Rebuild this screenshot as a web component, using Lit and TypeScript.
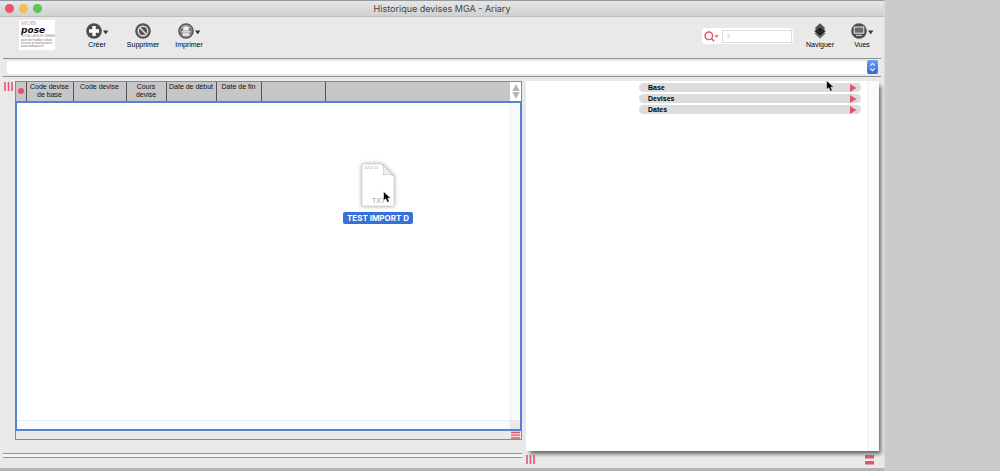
import { LitElement, html, css, svg } from "lit";
import { customElement } from "lit/decorators.js";

const COLUMNS = [
  { label: "Code devise de base", width: 47 },
  { label: "Code devise", width: 53 },
  { label: "Cours devise", width: 40 },
  { label: "Date de début", width: 50 },
  { label: "Date de fin", width: 45 },
  { label: "", width: 64 },
];

const SECTIONS = ["Base", "Devises", "Dates"];

const caret = svg`<path d="M17 7.6h5.4l-2.7 3.6z" fill="#333"/>`;

const icons = {
  add: { width: 22, art: svg`<circle cx="8" cy="8" r="7.8" fill="#4d4d4d"/><path d="M8 3v10M3 8h10" stroke="#fff" stroke-width="3.4"/>${caret}` },
  remove: { width: 16, art: svg`<circle cx="8" cy="8" r="7.8" fill="#555"/><circle cx="8" cy="8" r="4.8" fill="none" stroke="#ddd" stroke-width="1.4"/><path d="M4.8 4.8l6.4 6.4" stroke="#ddd" stroke-width="1.5"/>` },
  print: { width: 22, art: svg`<circle cx="8" cy="8" r="7" fill="#c4c4c4" stroke="#555" stroke-width="1.6"/><path d="M2.4 5h2v6h-2zM11.6 5h2v6h-2z" fill="#666"/><path d="M4.8 3h6.4v5H4.8zM4.2 9.8h7.6v3.4H4.2z" fill="#f0f0f0" stroke="#666" stroke-width=".7"/><path d="M3.4 8h9.2v1.6H3.4z" fill="#d4d4d4"/>${caret}` },
  layers: { width: 16, art: svg`<path d="M8 5.5l5.6 5L8 15.8l-5.6-5.3z" fill="#777"/><path d="M8 3l5.6 5L8 13.4 2.4 8z" fill="#222" stroke="#888" stroke-width=".4"/><path d="M8 .2l5.2 4.9L8 10.2 2.8 5.1z" fill="#555"/><path d="M5 6.5l3-2 3 2-3 3.2z" fill="#1c1c1c"/>` },
  views: { width: 22, art: svg`<circle cx="8" cy="8" r="7.8" fill="#4d4d4d"/><rect x="3.2" y="4" width="9.6" height="6.2" fill="#6a6a6a" stroke="#e8e8e8" stroke-width="1"/><path d="M5 12.4h6" stroke="#ccc" stroke-width="1.1"/>${caret}` },
};

const pointer = html`<svg width="8" height="12" viewBox="0 0 7 12" preserveAspectRatio="none" aria-hidden="true">
  <path d="M.5.6v8.9l1.9-1.8 1.4 3.5 1.7-.8L4.2 7.2h2.6z" fill="#000" stroke="#fff" stroke-width=".5"/>
</svg>`;

@customElement("tool-button")
class ToolButton extends LitElement {
  static properties = { icon: {}, label: {} };
  declare icon: keyof typeof icons;
  declare label: string;

  static styles = css`
    :host { display: block; }
    .tool {
      display: flex; flex-direction: column; align-items: center; gap: 1px;
      width: 100%; padding: 0; border: 0; background: none; color: #000;
      font: 7px/9px "Liberation Sans", Arial, sans-serif;
    }
    .glyph { display: block; overflow: visible; }
  `;

  render() {
    const { width, art } = icons[this.icon];
    return html`<button class="tool" type="button">
      <svg class="glyph" width=${width} height="16" viewBox="0 0 ${width} 16" aria-hidden="true">${art}</svg>
      <span>${this.label}</span>
    </button>`;
  }
}

@customElement("app-root")
class AppRoot extends LitElement {
  static styles = css`
    :host {
      display: block; min-height: 100vh; background: #cbcbcb; color: #111;
      font: 7px/8px "Liberation Sans", Arial, sans-serif;
    }
    * { box-sizing: border-box; }
    button, input, select { margin: 0; padding: 0; border: 0; font: inherit; }
    svg { display: block; }

    .window {
      position: relative; display: flex; flex-direction: column;
      margin-right: 115px; min-height: 100vh; background: #e9e9e9;
      border-top: 1px solid #8f999e; border-bottom: 3px solid #b5b1b5;
      border-right: 1px solid #dadada;
    }
    .titlebar {
      display: grid; grid-template-columns: 1fr auto 1fr; align-items: center;
      height: 16px; padding: 0 5px;
      background: linear-gradient(#e6e6e6, #d0d0d0); border-bottom: 1px solid #bdbdbd;
    }
    .lights { display: flex; gap: 5px; }
    .light { width: 9px; height: 9px; border-radius: 50%; }
    .close { background: #ed5468; }
    .minimise { background: #f4bd50; }
    .zoom { background: #5ac552; }
    .title { margin: 0; color: #444; font: 9px/14px Inter, sans-serif; }

    .toolbar { display: flex; height: 41px; padding: 3px 0 0 19px; }
    .logo {
      width: 36px; height: 30px; padding: 1px 2px; background: #fff; color: #777;
      overflow: hidden;
    }
    .logo-top { color: #c0aaa4; font-size: 6px; line-height: 5px; }
    .logo-name { color: #111; font: italic bold 9px/8px "DejaVu Sans", sans-serif; }
    .logo-tag { color: #b08a84; font-size: 3px; line-height: 5px; white-space: nowrap; }
    .logo-line { font-size: 3px; line-height: 3px; white-space: nowrap; }
    .tools { display: flex; padding-top: 3px; }
    .tools-start { margin-left: 19px; flex: 1; }
    .tool-item { width: 46px; }
    .nav-item { width: 42px; }
    .search {
      display: flex; align-items: center; gap: 3px; width: 91px; height: 16px;
      margin: 8px 6px 0 0; padding-left: 2px; border-radius: 4px; background: #fff;
    }
    .search-field {
      width: 70px; height: 13px; padding-left: 3px; border: 1px solid #ddd;
      background: #fff; color: #333; outline: 0;
    }
    .search-field::placeholder { color: #bbb; }
    .tools-end { margin-right: 1px; }

    .path {
      display: flex; position: relative; height: 19px; margin: 0 3px; padding: 2px 3px 2px 4px;
      border-top: 1px solid #8c9194; border-bottom: 1px solid #8c9194;
    }
    .path-select {
      appearance: none; flex: 1; background: #fff; border-radius: 3px; outline: 0;
    }
    .path-arrows {
      position: absolute; right: 3px; top: 1px; width: 11px; height: 14px; pointer-events: none;
      border-radius: 2px; background: linear-gradient(#6aa0f2, #2f6be0);
    }

    .main {
      flex: 1; display: grid; grid-template-columns: 519fr 353fr; column-gap: 4px;
      padding: 4px 5px 0 3px;
    }
    .left { display: flex; flex-direction: column; }
    .left-body { flex: 1; display: flex; }
    .grip { width: 9px; height: 9px; color: #e4546e; }
    .rail { width: 12px; padding: 1px 0 0 1px; }
    .list {
      flex: 1; display: flex; flex-direction: column; min-width: 0;
      border: 1px solid #8a8a8a;
    }
    .list-head { display: flex; height: 19px; background: #c6c6c6; }
    .columns { flex: 1; height: 19px; border-collapse: collapse; table-layout: fixed; }
    .column {
      padding: 1px 0 0; vertical-align: top; text-align: center; font-weight: 400;
      border-right: 1px solid #555;
    }
    .column-last { border: 0; }
    .dot { width: 6px; height: 6px; margin: 5px auto 0 2px; border-radius: 50%; background: #e4546e; }
    .sorter { display: flex; flex-direction: column; justify-content: space-evenly; width: 11px; background: #fff; }
    .sort { display: block; background: none; }
    .sort-glyph { width: 8px; height: 7px; margin: 0 auto; fill: #b5b5b5; }
    .rows {
      flex: 1; display: grid; grid-template: 1fr 9px / 1fr 10px; margin: 0 -1px;
      border: 2px solid #5583d4; background: #fff;
    }
    .scroll-y { background: #fafafa; border-left: 1px solid #eee; }
    .scroll-x { background: #fafafa; border-top: 1px solid #eee; }
    .corner { background: #e9e9e9; }
    .list-foot { display: flex; justify-content: flex-end; height: 8px; padding-right: 1px; }
    .double-rule {
      height: 5px; margin: 13px 0 10px; background: #f5f5f5;
      border-top: 1px solid #8d9497; border-bottom: 1px solid #8d9497;
    }

    .right { display: flex; flex-direction: column; }
    .panel {
      flex: 1; display: flex; justify-content: flex-end;
      background: #fff; box-shadow: 3px 4px 4px -1px #666;
      clip-path: inset(0 -6px -6px 0);
    }
    .sections { display: flex; flex-direction: column; gap: 2px; width: 222px; margin: 2px 6px 0 0; }
    .section {
      display: flex; align-items: center; justify-content: space-between; height: 9px;
      padding: 0 4px 0 9px; border-radius: 5px; background: #dcdcdc; color: #000;
      font-weight: 700; line-height: 9px;
    }
    .panel-scroll { width: 12px; background: #fafafa; border-left: 1px solid #f0f0f0; }
    .right-foot { display: flex; justify-content: space-between; height: 17px; padding: 4px 5px 0 0; }

    .dragged {
      position: absolute; left: 343px; top: 161px; display: flex; flex-direction: column;
      align-items: center; gap: 4px;
    }
    .file { filter: drop-shadow(0 0 2px #aaa); }
    .file-type { font-size: 7px; fill: #999; }
    .file-text { font-size: 4px; fill: #aaa; }
    .file-name {
      padding: 0 4px; border-radius: 2px; background: #3471d8; color: #fff;
      font: bold 8px/12px Inter, sans-serif; white-space: nowrap;
    }
    .pointer { position: absolute; }
    .pointer-drag { left: 383px; top: 190px; }
    .pointer-nav { right: 50px; top: 79px; }
  `;

  private grip() {
    return html`<svg class="grip" viewBox="0 0 9 9" aria-hidden="true">
      <path d="M1 0v9M4.5 0v9M8 0v9" stroke="currentColor" stroke-width="1.6"/>
    </svg>`;
  }

  render() {
    return html`<div class="window">
      <header class="titlebar">
        <div class="lights">
          <button class="light close" type="button" aria-label="Fermer"></button>
          <button class="light minimise" type="button" aria-label="Réduire"></button>
          <button class="light zoom" type="button" aria-label="Agrandir"></button>
        </div>
        <h1 class="title">Historique devises MGA - Ariary</h1>
      </header>

      <nav class="toolbar">
        <div class="logo">
          <div class="logo-top">MOBI</div>
          <div class="logo-name">pose</div>
          <div class="logo-tag">INSTALLATEUR URBAIN</div>
          <div class="logo-line">pose de mobilier urbain</div>
          <div class="logo-line">travaux et maintenance</div>
          <div class="logo-line">www.mobipose.fr</div>
        </div>
        <div class="tools tools-start">
          <tool-button class="tool-item" icon="add" label="Créer"></tool-button>
          <tool-button class="tool-item" icon="remove" label="Supprimer"></tool-button>
          <tool-button class="tool-item" icon="print" label="Imprimer"></tool-button>
        </div>
        <label class="search">
          <svg width="15" height="11" viewBox="0 0 15 11" aria-hidden="true">
            <circle cx="4.8" cy="4.8" r="3.8" fill="none" stroke="#e4546e" stroke-width="1.4"/>
            <path d="M7.5 7.5l2.6 2.7" stroke="#e4546e" stroke-width="1.5"/>
            <path d="M10.4 4.2h4.2l-2.1 2.6z" fill="#e4546e"/>
          </svg>
          <input class="search-field" type="text" placeholder="?" aria-label="Rechercher">
        </label>
        <div class="tools tools-end">
          <tool-button class="nav-item" icon="layers" label="Naviguer"></tool-button>
          <tool-button class="nav-item" icon="views" label="Vues"></tool-button>
        </div>
      </nav>

      <div class="path">
        <select class="path-select" aria-label="Filtre"><option></option></select>
        <svg class="path-arrows" viewBox="0 0 12 14" aria-hidden="true">
          <path d="M3.6 5.6L6 3.2l2.4 2.4M3.6 8.6L6 11l2.4-2.4" fill="none" stroke="#fff" stroke-width="1.1"/>
        </svg>
      </div>

      <main class="main">
        <section class="left">
          <div class="left-body">
            <div class="rail">${this.grip()}</div>
            <div class="list">
              <div class="list-head">
                <table class="columns">
                  <colgroup>
                    <col style="width:10px">
                    ${COLUMNS.map((c) => html`<col style="width:${c.width}px">`)}
                    <col>
                  </colgroup>
                  <thead><tr>
                    <th class="column"><div class="dot"></div></th>
                    ${COLUMNS.map((c) => html`<th class="column" scope="col">${c.label}</th>`)}
                    <th class="column column-last"></th>
                  </tr></thead>
                </table>
                <div class="sorter">
                  <button class="sort" type="button" aria-label="Monter">
                    <svg class="sort-glyph" viewBox="0 0 8 7"><path d="M4 0l3.6 7H.4z"/></svg>
                  </button>
                  <button class="sort" type="button" aria-label="Descendre">
                    <svg class="sort-glyph" viewBox="0 0 8 7"><path d="M4 7L.4 0h7.2z"/></svg>
                  </button>
                </div>
              </div>
              <div class="rows">
                <div></div><div class="scroll-y"></div>
                <div class="scroll-x"></div><div class="corner"></div>
              </div>
              <div class="list-foot">
                <svg width="9" height="8" viewBox="0 0 9 8" aria-hidden="true">
                  <path d="M0 1.5h9M0 4.2h9M0 7h9" stroke="#e4546e" stroke-width="1.3"/>
                </svg>
              </div>
            </div>
          </div>
          <div class="double-rule"></div>
        </section>

        <section class="right">
          <div class="panel">
            <div class="sections">
              ${SECTIONS.map((s) => html`<button class="section" type="button">
                <span>${s}</span>
                <svg width="7" height="8" viewBox="0 0 7 8" aria-hidden="true"><path d="M0 0l6.4 4L0 8z" fill="#e4546e"/></svg>
              </button>`)}
            </div>
            <div class="panel-scroll"></div>
          </div>
          <div class="right-foot">
            ${this.grip()}
            <svg width="9" height="10" viewBox="0 0 9 10" aria-hidden="true">
              <path d="M0 0h9v3.4H0zM0 6h9v3.6H0z" fill="#e4546e"/>
            </svg>
          </div>
        </section>
      </main>

      <div class="dragged">
        <svg class="file" width="34" height="46" viewBox="0 0 34 46" aria-hidden="true">
          <path d="M1 2h20l12 12v30H1z" fill="#fff" stroke="#ccc" stroke-width=".7"/>
          <path d="M21 2c2 3 2 7 1 11 4-1 8-1 11 1z" fill="#eee" stroke="#bbb" stroke-width=".6"/>
          <text class="file-text" x="3" y="7">1010 10</text>
          <text class="file-type" x="11" y="41">TXT</text>
        </svg>
        <span class="file-name">TEST IMPORT D</span>
      </div>
      <div class="pointer pointer-drag">${pointer}</div>
      <div class="pointer pointer-nav">${pointer}</div>
    </div>`;
  }
}
